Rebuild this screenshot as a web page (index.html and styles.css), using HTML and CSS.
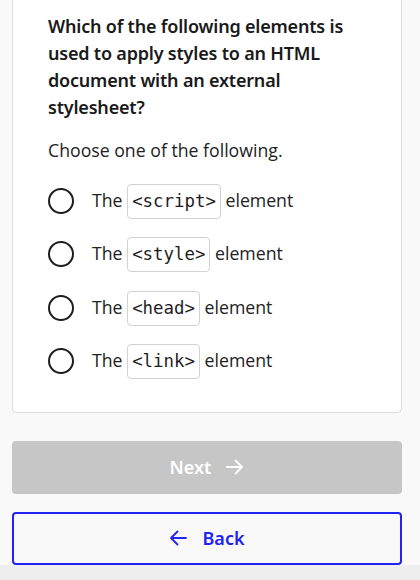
FILE: index.html
```html
<!DOCTYPE html>
<html lang="en">
<head>
<meta charset="utf-8">
<title>Quiz</title>
<link rel="stylesheet" href="styles.css">
</head>
<body>
<div class="page">
  <main class="content">
    <section class="card">
      <h2 class="question">Which of the following elements is used to apply styles to an HTML document with an external stylesheet?</h2>
      <p class="hint">Choose one of the following.</p>
      <ul class="options">
        <li class="option"><span class="radio"></span><span class="label">The <code class="code">&lt;script&gt;</code> element</span></li>
        <li class="option"><span class="radio"></span><span class="label">The <code class="code">&lt;style&gt;</code> element</span></li>
        <li class="option"><span class="radio"></span><span class="label">The <code class="code">&lt;head&gt;</code> element</span></li>
        <li class="option"><span class="radio"></span><span class="label">The <code class="code">&lt;link&gt;</code> element</span></li>
      </ul>
    </section>
    <div class="actions">
      <button class="btn btn-next" disabled>
        <span>Next</span>
        <svg class="icon" viewBox="0 0 18 18" width="18" height="18"><path d="M1 9h15M9.5 2.5L16 9l-6.5 6.5" fill="none" stroke="currentColor" stroke-width="1.8" stroke-linecap="round" stroke-linejoin="round"/></svg>
      </button>
      <button class="btn btn-back">
        <svg class="icon" viewBox="0 0 18 18" width="18" height="18"><path d="M17 9H2M8.5 2.5L2 9l6.5 6.5" fill="none" stroke="currentColor" stroke-width="1.8" stroke-linecap="round" stroke-linejoin="round"/></svg>
        <span>Back</span>
      </button>
    </div>
  </main>
  <div class="footer-strip"></div>
</div>
</body>
</html>
```
FILE: styles.css
```css
* { box-sizing: border-box; }
html, body {
  margin: 0;
  padding: 0;
  background: #eeeeee;
  font-family: "Open Sans", "Liberation Sans", sans-serif;
  color: #1e1e1e;
}
.page {
  display: flex;
  flex-direction: column;
  height: 580px;
}
.content {
  background: #f9f9f9;
  padding: 0 18px 0 12px;
  height: 565px;
}
.card {
  background: #ffffff;
  border: 1px solid #dcdcdc;
  border-top: none;
  border-radius: 0 0 5px 5px;
  padding: 13px 35px 34px 35px;
}
.question {
  margin: 0;
  font-family: "Noto Sans", "Open Sans", sans-serif;
  font-size: 18px;
  line-height: 27px;
  font-weight: 600;
  letter-spacing: -0.2px;
  color: #1a1a1a;
}
.hint {
  margin: 16px 0 0 0;
  font-size: 17.7px;
  line-height: 27px;
  color: #222;
}
.options {
  list-style: none;
  margin: 19.5px 0 0 0;
  padding: 0;
  display: flex;
  flex-direction: column;
  gap: 18.3px;
}
.option {
  display: flex;
  align-items: center;
  height: 35px;
}
.radio {
  width: 26px;
  height: 26px;
  border: 2px solid #1e1e1e;
  border-radius: 50%;
  flex: none;
  margin-right: 18px;
}
.label {
  font-size: 17.7px;
  line-height: 35px;
  color: #222;
}
.code {
  display: inline-block;
  font-family: "DejaVu Sans Mono", "Liberation Mono", monospace;
  font-size: 17.4px;
  line-height: 21px;
  padding: 6px 4px;
  border: 1px solid #d2d2d2;
  border-radius: 4px;
  color: #1e1e1e;
}
.actions {
  display: flex;
  flex-direction: column;
  gap: 18px;
  margin-top: 27.5px;
}
.btn {
  height: 53px;
  width: 100%;
  display: flex;
  align-items: center;
  justify-content: center;
  gap: 15px;
  font-family: "Noto Sans", "Open Sans", "Liberation Sans", sans-serif;
  font-size: 18px;
  font-weight: 600;
  border-radius: 4px;
  padding: 0;
}
.btn-next {
  background: #c6c6c6;
  color: #ffffff;
  border: none;
}
.btn-back {
  background: #f9f9f9;
  color: #2222f2;
  border: 2px solid #2222f2;
}
.icon { display: block; }
.footer-strip {
  height: 15px;
  background: #eeeeee;
}
```
